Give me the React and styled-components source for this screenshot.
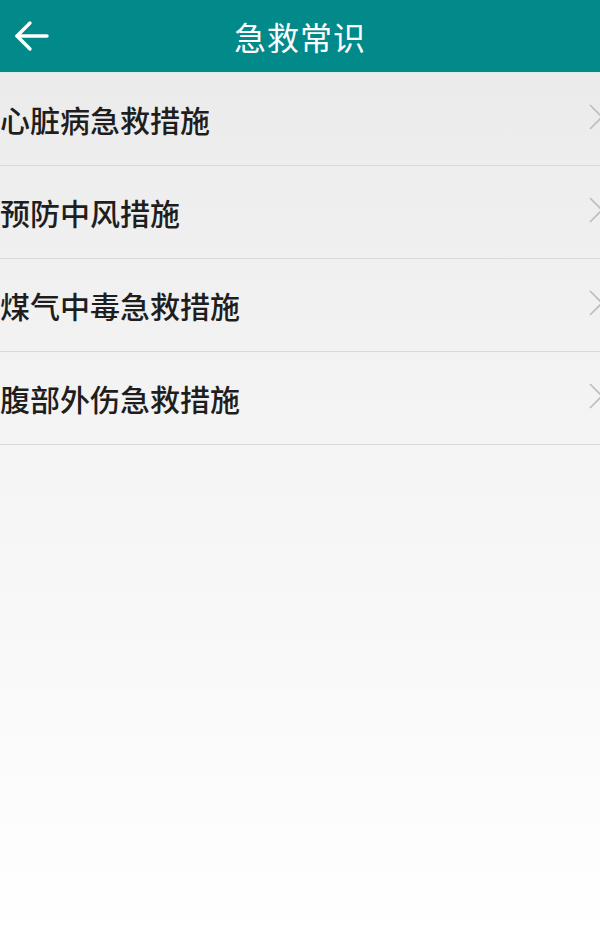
import React from 'react'
import styled, { createGlobalStyle } from 'styled-components'

const GlobalStyle = createGlobalStyle`
  html, body {
    margin: 0;
    padding: 0;
  }
  body {
    font-family: "Noto Sans CJK SC", "Noto Sans", sans-serif;
  }
`

const items = ['心脏病急救措施', '预防中风措施', '煤气中毒急救措施', '腹部外伤急救措施']

function App() {
  return (
    <Page>
      <GlobalStyle />
      <Header>
        <BackButton>
          <svg width="36" height="32" viewBox="0 0 36 32" fill="none" stroke="#fff" strokeWidth="3.4" strokeLinecap="round" strokeLinejoin="round">
            <path d="M33 16H3" />
            <path d="M16 3L3 16l13 13" />
          </svg>
        </BackButton>
        <Title>急救常识</Title>
      </Header>
      <List>
        {items.map((t) => (
          <Row key={t}>
            <RowText>{t}</RowText>
            <Chevron>
              <svg width="14" height="26" viewBox="0 0 14 26" fill="none" stroke="#bdbdbd" strokeWidth="1.6">
                <path d="M1 1l12 12L1 25" />
              </svg>
            </Chevron>
          </Row>
        ))}
      </List>
    </Page>
  )
}

export default App

const Page = styled.div`
  width: 600px;
  min-height: 946px;
  background: linear-gradient(to bottom, #e9e9e9 0%, #f3f3f3 40%, #ffffff 100%);
  display: flex;
  flex-direction: column;
`

const Header = styled.div`
  height: 72px;
  background: #02898a;
  display: flex;
  align-items: center;
  justify-content: center;
  position: relative;
  border-bottom: 1px solid #d8ecea;
`

const BackButton = styled.div`
  position: absolute;
  left: 14px;
  top: 20px;
  display: flex;
`

const Title = styled.div`
  color: #fff;
  font-size: 32px;
  letter-spacing: 1px;
`

const List = styled.div`
  display: flex;
  flex-direction: column;
`

const Row = styled.div`
  height: 92px;
  display: flex;
  align-items: center;
  justify-content: space-between;
  border-bottom: 1px solid #d9d9d9;
`

const RowText = styled.div`
  font-size: 30px;
  font-weight: 500;
  color: #1e1e1e;
`

const Chevron = styled.div`
  display: flex;
  margin-right: -3px;
  margin-top: -4px;
`
